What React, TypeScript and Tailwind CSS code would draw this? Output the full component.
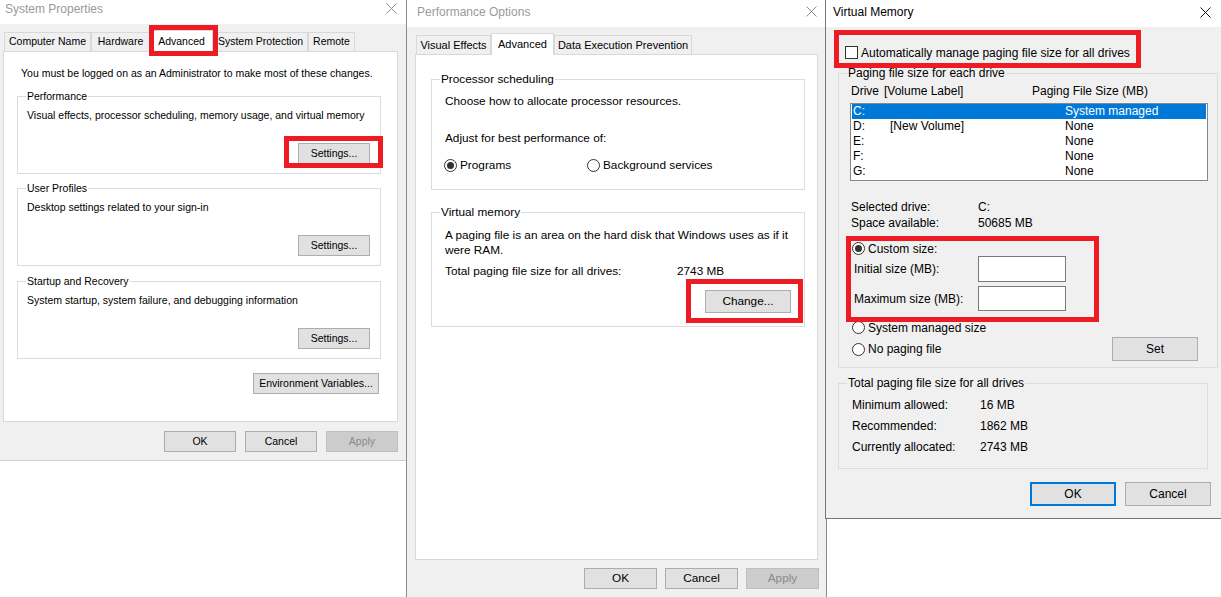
import type { ReactNode } from 'react'

// three overlapping Windows dialogs: System Properties > Performance Options > Virtual Memory

function CloseX({ color, className = '' }: { color: string; className?: string }) {
  return (
    <svg width="11" height="11" viewBox="0 0 11 11" className={className}>
      <path d="M0.5 0.5L10.5 10.5M10.5 0.5L0.5 10.5" stroke={color} strokeWidth="1" fill="none" />
    </svg>
  )
}

function Radio({ checked = false }: { checked?: boolean }) {
  return (
    <span className="flex h-[13px] w-[13px] shrink-0 items-center justify-center rounded-full border border-[#333] bg-white">
      {checked && <span className="h-[7px] w-[7px] rounded-full bg-[#333]" />}
    </span>
  )
}

function Button({
  label,
  className = '',
  disabled = false,
  focused = false,
}: {
  label: string
  className?: string
  disabled?: boolean
  focused?: boolean
}) {
  const tone = disabled
    ? 'border border-[#bfbfbf] bg-[#cccccc] text-[#8a8a8a]'
    : focused
      ? 'border-2 border-[#0078d7] bg-[#e1e1e1] text-black'
      : 'border border-[#adadad] bg-[#e1e1e1] text-black'
  return <div className={`flex shrink-0 items-center justify-center ${tone} ${className}`}>{label}</div>
}

function Group({
  label,
  bg,
  className = '',
  children,
}: {
  label: string
  bg: string
  className?: string
  children?: ReactNode
}) {
  return (
    <div className={`relative border border-[#dcdcdc] ${className}`}>
      <span className={`absolute left-[8px] top-[-8px] whitespace-nowrap px-[1px] leading-[15px] ${bg}`}>{label}</span>
      {children}
    </div>
  )
}

function Tab({ label, width, active = false }: { label: string; width: string; active?: boolean }) {
  return active ? (
    <div className={`relative z-10 -mb-px flex h-[22px] shrink-0 items-center justify-center border border-b-0 border-[#d9d9d9] bg-white ${width}`}>
      {label}
    </div>
  ) : (
    <div className={`flex h-[19px] shrink-0 items-center justify-center border border-b-0 border-[#d9d9d9] bg-[#f0f0f0] ${width}`}>
      {label}
    </div>
  )
}

function SystemProperties() {
  const sections = [
    { title: 'Performance', desc: 'Visual effects, processor scheduling, memory usage, and virtual memory', mt: 'mt-[16px]' },
    { title: 'User Profiles', desc: 'Desktop settings related to your sign-in', mt: 'mt-[14px]' },
    { title: 'Startup and Recovery', desc: 'System startup, system failure, and debugging information', mt: 'mt-[15px]' },
  ]
  return (
    <div className="absolute left-0 top-0 h-[461px] w-[406px] border-b border-[#cfcfcf] bg-[#f0f0f0] text-[10.5px] text-black">
      <div className="flex h-[24px] items-start justify-between bg-white">
        <span className="pl-[5px] text-[12px] leading-[18px] text-[#9a9a9a]">System Properties</span>
        <CloseX color="#8f8f8f" className="mr-[9px] mt-[3px]" />
      </div>

      <div className="ml-[4px] mt-[6px] flex h-[21px] items-end">
        <Tab label="Computer Name" width="w-[87px]" />
        <Tab label="Hardware" width="w-[59px]" />
        <Tab label="Advanced" width="w-[63px]" active />
        <Tab label="System Protection" width="w-[95px]" />
        <Tab label="Remote" width="w-[47px]" />
      </div>

      <div className="ml-[3px] h-[371px] w-[395px] border border-[#d9d9d9] bg-white">
        <p className="ml-[17px] mt-[14px] whitespace-nowrap leading-[14px]">
          You must be logged on as an Administrator to make most of these changes.
        </p>
        {sections.map(s => (
          <Group key={s.title} label={s.title} bg="bg-white" className={`ml-[13px] h-[78px] w-[364px] ${s.mt}`}>
            <p className="whitespace-nowrap pl-[9px] pt-[11px] leading-[14px]">{s.desc}</p>
            <div className="mt-[21px] flex justify-end pr-[10px]">
              <Button label="Settings..." className="h-[21px] w-[72px]" />
            </div>
          </Group>
        ))}
        <div className="mr-[18px] mt-[14px] flex justify-end">
          <Button label="Environment Variables..." className="h-[21px] w-[126px]" />
        </div>
      </div>

      <div className="mt-[9px] flex justify-end gap-[9px] pr-[8px]">
        <Button label="OK" className="h-[21px] w-[72px]" />
        <Button label="Cancel" className="h-[21px] w-[72px]" />
        <Button label="Apply" className="h-[21px] w-[72px]" disabled />
      </div>
    </div>
  )
}

function PerformanceOptions() {
  return (
    <div className="absolute left-[406px] top-0 h-[620px] w-[421px] border-x border-[#8a8a8a] bg-[#f0f0f0] text-[11.8px] text-black">
      <div className="flex h-[27px] items-start justify-between bg-white">
        <span className="pl-[10px] text-[12px] leading-[24px] text-[#9a9a9a]">Performance Options</span>
        <CloseX color="#8f8f8f" className="mr-[9px] mt-[6px]" />
      </div>

      <div className="ml-[9px] mt-[6px] flex h-[21px] items-end text-[11px]">
        <Tab label="Visual Effects" width="w-[75px]" />
        <Tab label="Advanced" width="w-[63px]" active />
        <Tab label="Data Execution Prevention" width="w-[138px]" />
      </div>

      <div className="ml-[8px] h-[506px] w-[403px] border border-[#d9d9d9] bg-white">
        <Group label="Processor scheduling" bg="bg-white" className="ml-[15px] mt-[24px] h-[111px] w-[374px]">
          <p className="pl-[13px] pt-[14px] leading-[15px]">Choose how to allocate processor resources.</p>
          <p className="mt-[22px] pl-[13px] leading-[15px]">Adjust for best performance of:</p>
          <div className="mt-[12px] flex h-[15px] items-center pl-[12px]">
            <div className="flex w-[143px] items-center gap-[3px]">
              <Radio checked />
              <span>Programs</span>
            </div>
            <div className="flex items-center gap-[3px]">
              <Radio />
              <span>Background services</span>
            </div>
          </div>
        </Group>

        <Group label="Virtual memory" bg="bg-white" className="ml-[15px] mt-[22px] h-[115px] w-[374px]">
          <p className="whitespace-nowrap pl-[13px] pt-[15px] leading-[15px]">
            A paging file is an area on the hard disk that Windows uses as if it
            <br />
            were RAM.
          </p>
          <div className="mt-[6px] flex pl-[13px] leading-[15px]">
            <span className="w-[232px]">Total paging file size for all drives:</span>
            <span>2743 MB</span>
          </div>
          <div className="mt-[11px] flex justify-end pr-[13px]">
            <Button label="Change..." className="h-[23px] w-[86px]" />
          </div>
        </Group>
      </div>

      <div className="mt-[8px] flex justify-end gap-[8px] pr-[7px]">
        <Button label="OK" className="h-[21px] w-[73px]" />
        <Button label="Cancel" className="h-[21px] w-[73px]" />
        <Button label="Apply" className="h-[21px] w-[73px]" disabled />
      </div>
    </div>
  )
}

const drives = [
  { drive: 'C:', label: '', size: 'System managed' },
  { drive: 'D:', label: '[New Volume]', size: 'None' },
  { drive: 'E:', label: '', size: 'None' },
  { drive: 'F:', label: '', size: 'None' },
  { drive: 'G:', label: '', size: 'None' },
]

const totals = [
  ['Minimum allowed:', '16 MB'],
  ['Recommended:', '1862 MB'],
  ['Currently allocated:', '2743 MB'],
]

function VirtualMemory() {
  return (
    <div className="absolute left-[825px] top-0 h-[519px] w-[397px] border-b border-l border-[#777] bg-[#f0f0f0] text-[12px] text-black">
      <div className="flex h-[27px] items-start justify-between bg-white">
        <span className="pl-[7px] leading-[24px]">Virtual Memory</span>
        <CloseX color="#111" className="mr-[11px] mt-[7px]" />
      </div>

      <div className="mt-[18px] flex h-[15px] items-center gap-[3px] pl-[19px]">
        <span className="h-[13px] w-[13px] shrink-0 border border-[#333] bg-white" />
        <span>Automatically manage paging file size for all drives</span>
      </div>

      <Group label="Paging file size for each drive" bg="bg-[#f0f0f0]" className="ml-[12px] mt-[13px] h-[295px] w-[380px]">
        <div className="flex pl-[12px] pt-[10px] leading-[14px]">
          <span className="w-[33px]">Drive</span>
          <span className="w-[148px]">[Volume Label]</span>
          <span>Paging File Size (MB)</span>
        </div>
        <div className="ml-[11px] mt-[5px] h-[78px] w-[358px] border border-[#828790] bg-white">
          {drives.map((d, i) => (
            <div
              key={d.drive}
              className={`mx-px flex h-[15px] items-center pl-px leading-[15px] ${i === 0 ? 'bg-[#0078d7] text-white' : ''}`}
            >
              <span className="w-[37px]">{d.drive}</span>
              <span className="w-[175px]">{d.label}</span>
              <span>{d.size}</span>
            </div>
          ))}
        </div>

        <div className="mt-[18px] pl-[12px] leading-[16px]">
          <div className="flex">
            <span className="w-[127px]">Selected drive:</span>
            <span>C:</span>
          </div>
          <div className="flex">
            <span className="w-[127px]">Space available:</span>
            <span>50685 MB</span>
          </div>
        </div>

        <div className="mt-[10px] flex h-[15px] items-center gap-[3px] pl-[13px]">
          <Radio checked />
          <span>Custom size:</span>
        </div>
        <div className="flex h-[26px] items-center pl-[15px]">
          <span className="w-[124px]">Initial size (MB):</span>
          <span className="h-[26px] w-[88px] border border-[#7a7a7a] bg-white" />
        </div>
        <div className="mt-[4px] flex h-[25px] items-center pl-[15px]">
          <span className="w-[124px]">Maximum size (MB):</span>
          <span className="h-[25px] w-[88px] border border-[#7a7a7a] bg-white" />
        </div>
        <div className="mt-[9px] flex h-[15px] items-center gap-[3px] pl-[13px]">
          <Radio />
          <span>System managed size</span>
        </div>
        <div className="mt-[2px] flex h-[24px] items-center justify-between pl-[13px] pr-[19px]">
          <div className="flex items-center gap-[3px]">
            <Radio />
            <span>No paging file</span>
          </div>
          <Button label="Set" className="h-[24px] w-[86px]" />
        </div>
      </Group>

      <Group label="Total paging file size for all drives" bg="bg-[#f0f0f0]" className="ml-[12px] mt-[15px] h-[86px] w-[370px]">
        <div className="pl-[13px] pt-[11px] leading-[21px]">
          {totals.map(([k, v]) => (
            <div key={k} className="flex">
              <span className="w-[128px]">{k}</span>
              <span>{v}</span>
            </div>
          ))}
        </div>
      </Group>

      <div className="mt-[13px] flex justify-end gap-[9px] pr-[11px]">
        <Button label="OK" className="h-[24px] w-[86px]" focused />
        <Button label="Cancel" className="h-[24px] w-[86px]" />
      </div>
    </div>
  )
}

export default function App() {
  return (
    <div className="relative h-[597px] w-[1221px] overflow-hidden bg-white font-['Liberation_Sans',Arial,sans-serif]">
      <SystemProperties />
      <PerformanceOptions />
      <VirtualMemory />

      {/* red annotation boxes */}
      <div className="absolute left-[149px] top-[25px] z-20 h-[31px] w-[69px] border-[5px] border-[#ed1c24]" />
      <div className="absolute left-[284px] top-[136px] z-20 h-[32px] w-[99px] border-[5px] border-[#ed1c24]" />
      <div className="absolute left-[686px] top-[279px] z-20 h-[44px] w-[117px] border-[5px] border-[#ed1c24]" />
      <div className="absolute left-[834px] top-[30px] z-20 h-[38px] w-[307px] border-[5px] border-[#ed1c24]" />
      <div className="absolute left-[846px] top-[236px] z-20 h-[86px] w-[253px] border-[5px] border-[#ed1c24]" />
    </div>
  )
}
